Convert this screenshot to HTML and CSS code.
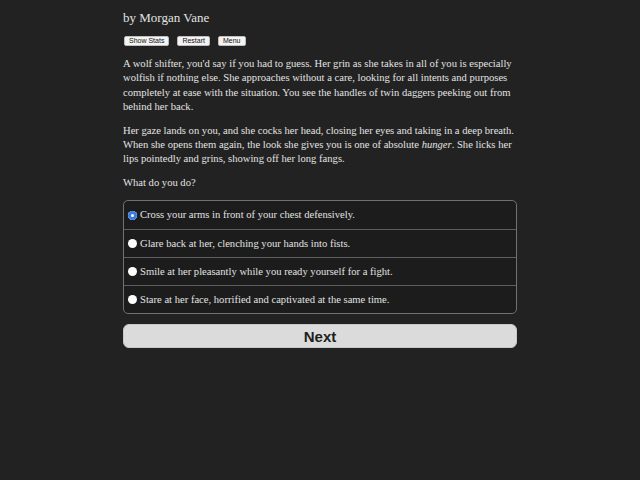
FILE: index.html
```html
<!DOCTYPE html>
<html lang="en">
<head>
<meta charset="utf-8">
<title>Choice</title>
<link rel="stylesheet" href="styles.css">
</head>
<body>
<main class="page">
  <header class="header">
    <p class="byline">by Morgan Vane</p>
    <nav class="toolbar">
      <button class="tool-btn" type="button">Show Stats</button>
      <button class="tool-btn" type="button">Restart</button>
      <button class="tool-btn" type="button">Menu</button>
    </nav>
  </header>

  <section class="story">
    <p>A wolf shifter, you'd say if you had to guess. Her grin as she takes in all of you is especially wolfish if nothing else. She approaches without a care, looking for all intents and purposes completely at ease with the situation. You see the handles of twin daggers peeking out from behind her back.</p>
    <p>Her gaze lands on you, and she cocks her head, closing her eyes and taking in a deep breath. When she opens them again, the look she gives you is one of absolute <em>hunger</em>. She licks her lips pointedly and grins, showing off her long fangs.</p>
    <p>What do you do?</p>
  </section>

  <form class="choice-form">
    <div class="choices">
      <label class="choice"><input type="radio" name="choice" checked><span>Cross your arms in front of your chest defensively.</span></label>
      <label class="choice"><input type="radio" name="choice"><span>Glare back at her, clenching your hands into fists.</span></label>
      <label class="choice"><input type="radio" name="choice"><span>Smile at her pleasantly while you ready yourself for a fight.</span></label>
      <label class="choice"><input type="radio" name="choice"><span>Stare at her face, horrified and captivated at the same time.</span></label>
    </div>
    <button class="next-btn" type="button">Next</button>
  </form>
</main>
</body>
</html>
```

FILE: styles.css
```css
html, body {
  margin: 0;
  padding: 0;
  background: #222222;
}

body {
  color: #e2e2e2;
  font-family: "Liberation Serif", "DejaVu Serif", serif;
  font-size: 10.6px;
  line-height: 14.3px;
}

.page {
  width: 394px;
  margin: 0 auto;
  padding-top: 10px;
}

.byline {
  margin: 0;
  font-size: 13px;
  line-height: 16px;
}

.toolbar {
  display: flex;
  gap: 8px;
  margin-top: 10px;
  margin-left: 1px;
}

.tool-btn {
  font-family: "Liberation Sans", Arial, sans-serif;
  font-size: 7px;
  line-height: 8px;
  height: 10px;
  padding: 0 4px;
  background: #f4f4f4;
  color: #111111;
  border: 1px solid #bdbdbd;
  border-radius: 2px;
}

.story {
  margin-top: 11px;
}

.story p {
  margin: 0 0 9.7px;
  padding-right: 1px;
}

.story em {
  line-height: 1;
}

.choice-form {
  margin-top: 7px;
}

.choices {
  border: 1px solid #707070;
  border-radius: 5px;
  background: #1c1c1c;
  overflow: hidden;
}

.choice {
  display: flex;
  align-items: center;
  gap: 3px;
  height: 27px;
  padding-left: 4px;
  border-top: 1px solid #5e5e5e;
}

.choice:first-child {
  height: 28px;
  border-top: none;
}

.choice input {
  appearance: none;
  -webkit-appearance: none;
  width: 9px;
  height: 9px;
  margin: 0;
  border-radius: 50%;
  background: #ffffff;
  flex: none;
}

.choice input:checked {
  background: #3a7ce0;
  box-shadow: inset 0 0 0 3px #3a7ce0, inset 0 0 0 9px #ffffff;
}

.next-btn {
  display: block;
  width: 100%;
  height: 24px;
  margin-top: 10px;
  background: #dbdbdb;
  color: #1e1e1e;
  border: 1px solid #c8c8c8;
  border-radius: 6px;
  font-family: "Liberation Sans", Arial, sans-serif;
  font-weight: bold;
  font-size: 15px;
}
```
